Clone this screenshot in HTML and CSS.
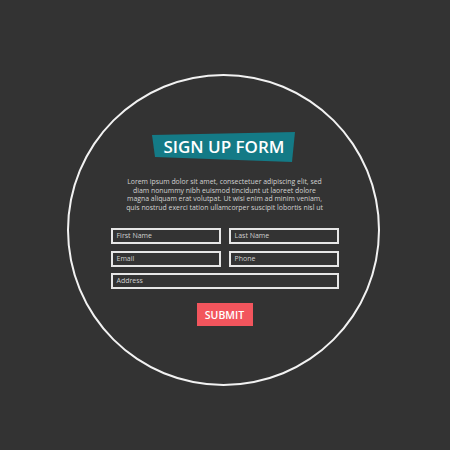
FILE: index.html
```
<!DOCTYPE html>
<html>
<head>
<meta charset="utf-8">
<link rel="stylesheet" href="styles.css">
</head>
<body>
<div class="page">
  <div class="circle">
    <div class="banner"><span>SIGN UP FORM</span></div>
    <p class="intro">Lorem ipsum dolor sit amet, consectetuer adipiscing elit, sed<br>diam nonummy nibh euismod tincidunt ut laoreet dolore<br>magna aliquam erat volutpat. Ut wisi enim ad minim veniam,<br>quis nostrud exerci tation ullamcorper suscipit lobortis nisl ut</p>
    <div class="fields">
      <div class="field">First Name</div>
      <div class="field">Last Name</div>
      <div class="field">Email</div>
      <div class="field">Phone</div>
      <div class="field wide">Address</div>
    </div>
    <div class="submit">SUBMIT</div>
  </div>
</div>
</body>
</html>
```
FILE: styles.css
```
html, body {
  margin: 0;
  padding: 0;
  background: #333333;
}
body {
  width: 450px;
  height: 450px;
  overflow: hidden;
  font-family: "Open Sans", "Noto Sans", sans-serif;
}
.page {
  padding: 74px 0 0 67px;
}
.circle {
  box-sizing: border-box;
  width: 313px;
  height: 312px;
  border: 2px solid #f2f2f2;
  border-radius: 50%;
  display: flex;
  flex-direction: column;
  align-items: center;
  padding-top: 56px;
}
.banner {
  width: 143px;
  height: 30px;
  background: #147a86;
  clip-path: polygon(0 3px, 143px 0, 140px 30px, 3px 25px);
  display: flex;
  align-items: center;
  justify-content: center;
}
.banner span {
  color: #ffffff;
  font-weight: 600;
  font-size: 17px;
  line-height: 1;
  margin-top: -1px;
  margin-left: 1px;
}
.intro {
  margin: 16px 0 0 0;
  color: #d2d2d2;
  font-size: 6.9px;
  line-height: 8.6px;
  text-align: center;
  margin-left: 2px;
}
.fields {
  margin-top: 16px;
  display: grid;
  grid-template-columns: 110px 110px;
  column-gap: 8px;
  row-gap: 6.5px;
  margin-left: 2px;
}
.field {
  box-sizing: border-box;
  height: 16px;
  border: 2px solid #e6e6e6;
  color: #d0d0d0;
  font-size: 7px;
  line-height: 12px;
  padding-left: 4px;
}
.wide {
  grid-column: 1 / 3;
}
.submit {
  margin-top: 14px;
  margin-left: 2px;
  width: 56px;
  height: 23px;
  background: #f2555d;
  color: #ffffff;
  font-weight: 600;
  font-size: 10.5px;
  display: flex;
  align-items: center;
  justify-content: center;
}
```
